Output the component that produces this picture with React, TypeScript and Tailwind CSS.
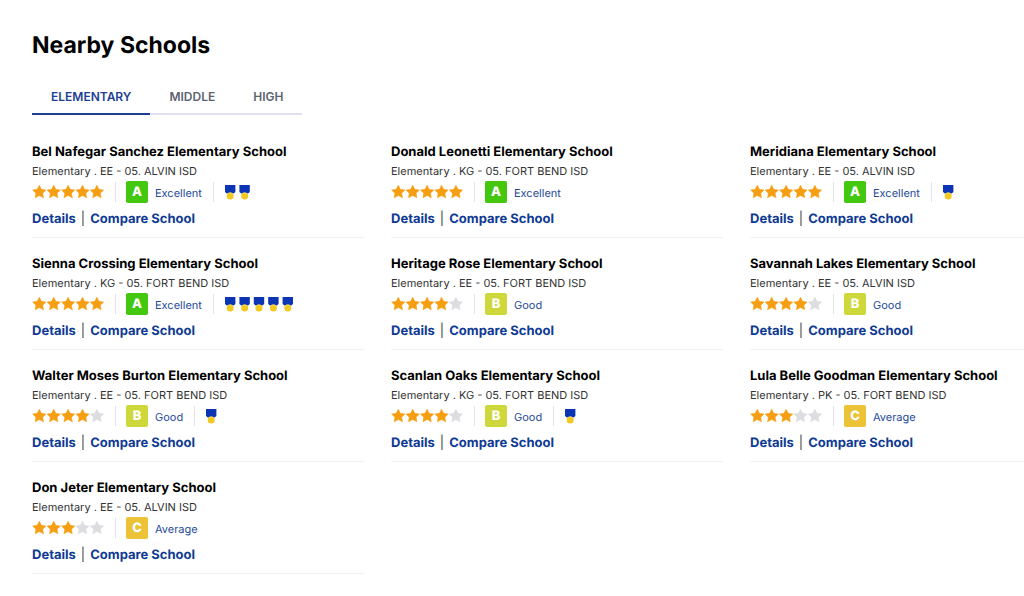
import { useState } from 'react';

interface School {
  name: string;
  grades: string;
  district: string;
  stars: number;
  grade: 'A' | 'B' | 'C';
  medals: number;
}

const schools: School[] = [
  { name: 'Bel Nafegar Sanchez Elementary School', grades: 'EE - 05', district: 'ALVIN ISD', stars: 5, grade: 'A', medals: 2 },
  { name: 'Donald Leonetti Elementary School', grades: 'KG - 05', district: 'FORT BEND ISD', stars: 5, grade: 'A', medals: 0 },
  { name: 'Meridiana Elementary School', grades: 'EE - 05', district: 'ALVIN ISD', stars: 5, grade: 'A', medals: 1 },
  { name: 'Sienna Crossing Elementary School', grades: 'KG - 05', district: 'FORT BEND ISD', stars: 5, grade: 'A', medals: 5 },
  { name: 'Heritage Rose Elementary School', grades: 'EE - 05', district: 'FORT BEND ISD', stars: 4, grade: 'B', medals: 0 },
  { name: 'Savannah Lakes Elementary School', grades: 'EE - 05', district: 'ALVIN ISD', stars: 4, grade: 'B', medals: 0 },
  { name: 'Walter Moses Burton Elementary School', grades: 'EE - 05', district: 'FORT BEND ISD', stars: 4, grade: 'B', medals: 1 },
  { name: 'Scanlan Oaks Elementary School', grades: 'KG - 05', district: 'FORT BEND ISD', stars: 4, grade: 'B', medals: 1 },
  { name: 'Lula Belle Goodman Elementary School', grades: 'PK - 05', district: 'FORT BEND ISD', stars: 3, grade: 'C', medals: 0 },
  { name: 'Don Jeter Elementary School', grades: 'EE - 05', district: 'ALVIN ISD', stars: 3, grade: 'C', medals: 0 },
];

const ratings = {
  A: { label: 'Excellent', color: 'bg-[#43c80f]' },
  B: { label: 'Good', color: 'bg-[#cfd83a]' },
  C: { label: 'Average', color: 'bg-[#ecc236]' },
};

const tabs = ['ELEMENTARY', 'MIDDLE', 'HIGH'];

const slots = [0, 1, 2, 3, 4];

function Stars({ count }: { count: number }) {
  return (
    <svg width="72" height="14" viewBox="0 0 72 14" role="img" aria-label={`${count} out of 5 stars`}>
      {slots.map((i) => (
        <path
          key={i}
          transform={`translate(${i * 14.4} 0)`}
          d="M7.3 0.2 L9.4 4.3 L14 5 L10.7 8.2 L11.5 12.8 L7.3 10.6 L3.1 12.8 L3.9 8.2 L0.6 5 L5.2 4.3 Z"
          fill={i < count ? '#f59e12' : '#dcdde0'}
          stroke={i < count ? '#f59e12' : '#dcdde0'}
          strokeWidth="0.5"
          strokeLinejoin="round"
        />
      ))}
    </svg>
  );
}

function Medals({ count }: { count: number }) {
  return (
    <svg width="72" height="16" viewBox="0 0 72 16" role="img" aria-label={`${count} awards`}>
      {slots.slice(0, count).map((i) => (
        <g key={i} transform={`translate(${i * 14.4} 0)`}>
          <path d="M1 1 H11.4 V8 L9.6 9.6 H2.8 L1 8 Z" fill="#0b35b5" />
          <circle cx="6.2" cy="12" r="3.5" fill="#f2c921" />
          <path d="M3.6 9.6 L6.2 8.8 L8.8 9.6" fill="none" stroke="#f6dc6a" strokeWidth="0.7" />
        </g>
      ))}
    </svg>
  );
}

function Divider() {
  return <span className="mr-2.5 ml-[11px] h-5 w-px bg-[#e3e4ea]" />;
}

function SchoolCard({ school }: { school: School }) {
  const rating = ratings[school.grade];
  return (
    <article className="border-b border-[#f2f2f4] pb-2">
      <h3 className="text-[13px] leading-5 font-bold text-black">{school.name}</h3>
      <p className="text-[11px] leading-[18px] text-[#333]">
        Elementary . {school.grades}. {school.district}
      </p>
      <div className="mt-px flex h-[22px] items-center">
        <Stars count={school.stars} />
        <Divider />
        <span className={`flex h-[22px] w-[22px] items-center justify-center rounded-xs pt-0.5 text-[13px] font-extrabold text-white ${rating.color}`}>
          {school.grade}
        </span>
        <span className="ml-[7px] pt-0.5 text-[11px] leading-5 text-[#254a9a]">{rating.label}</span>
        {school.medals > 0 && (
          <>
            <Divider />
            <Medals count={school.medals} />
          </>
        )}
      </div>
      <div className="mt-1.5 flex text-[13px] leading-5 font-bold text-[#0f3a94]">
        <a href="#details">Details</a>
        <span className="mx-[5px] font-normal text-[#444]">|</span>
        <a href="#compare">Compare School</a>
      </div>
    </article>
  );
}

export default function App() {
  const [active, setActive] = useState('ELEMENTARY');

  return (
    <main className="min-h-screen overflow-hidden bg-white pt-7 pb-5 pl-8 font-['Inter',sans-serif] [text-rendering:geometricPrecision]">
      <h1 className="pt-px text-[23px] leading-8 font-bold text-black">Nearby Schools</h1>

      <div role="tablist" className="mt-[19px] flex">
        {tabs.map((tab) => (
          <button
            key={tab}
            role="tab"
            aria-selected={active === tab}
            onClick={() => setActive(tab)}
            className={`h-[35px] border-b-2 px-[19px] text-[12px] font-semibold ${
              active === tab ? 'border-[#1c3f94] text-[#1c3f94]' : 'border-[#e0e0f2] text-[#5c6272]'
            }`}
          >
            {tab}
          </button>
        ))}
      </div>

      {/* the third column runs past the right edge */}
      <section className="mt-[27px] -mr-[58px] grid grid-cols-3 gap-x-[27px] gap-y-4">
        {schools.map((school) => (
          <SchoolCard key={school.name} school={school} />
        ))}
      </section>
    </main>
  );
}
